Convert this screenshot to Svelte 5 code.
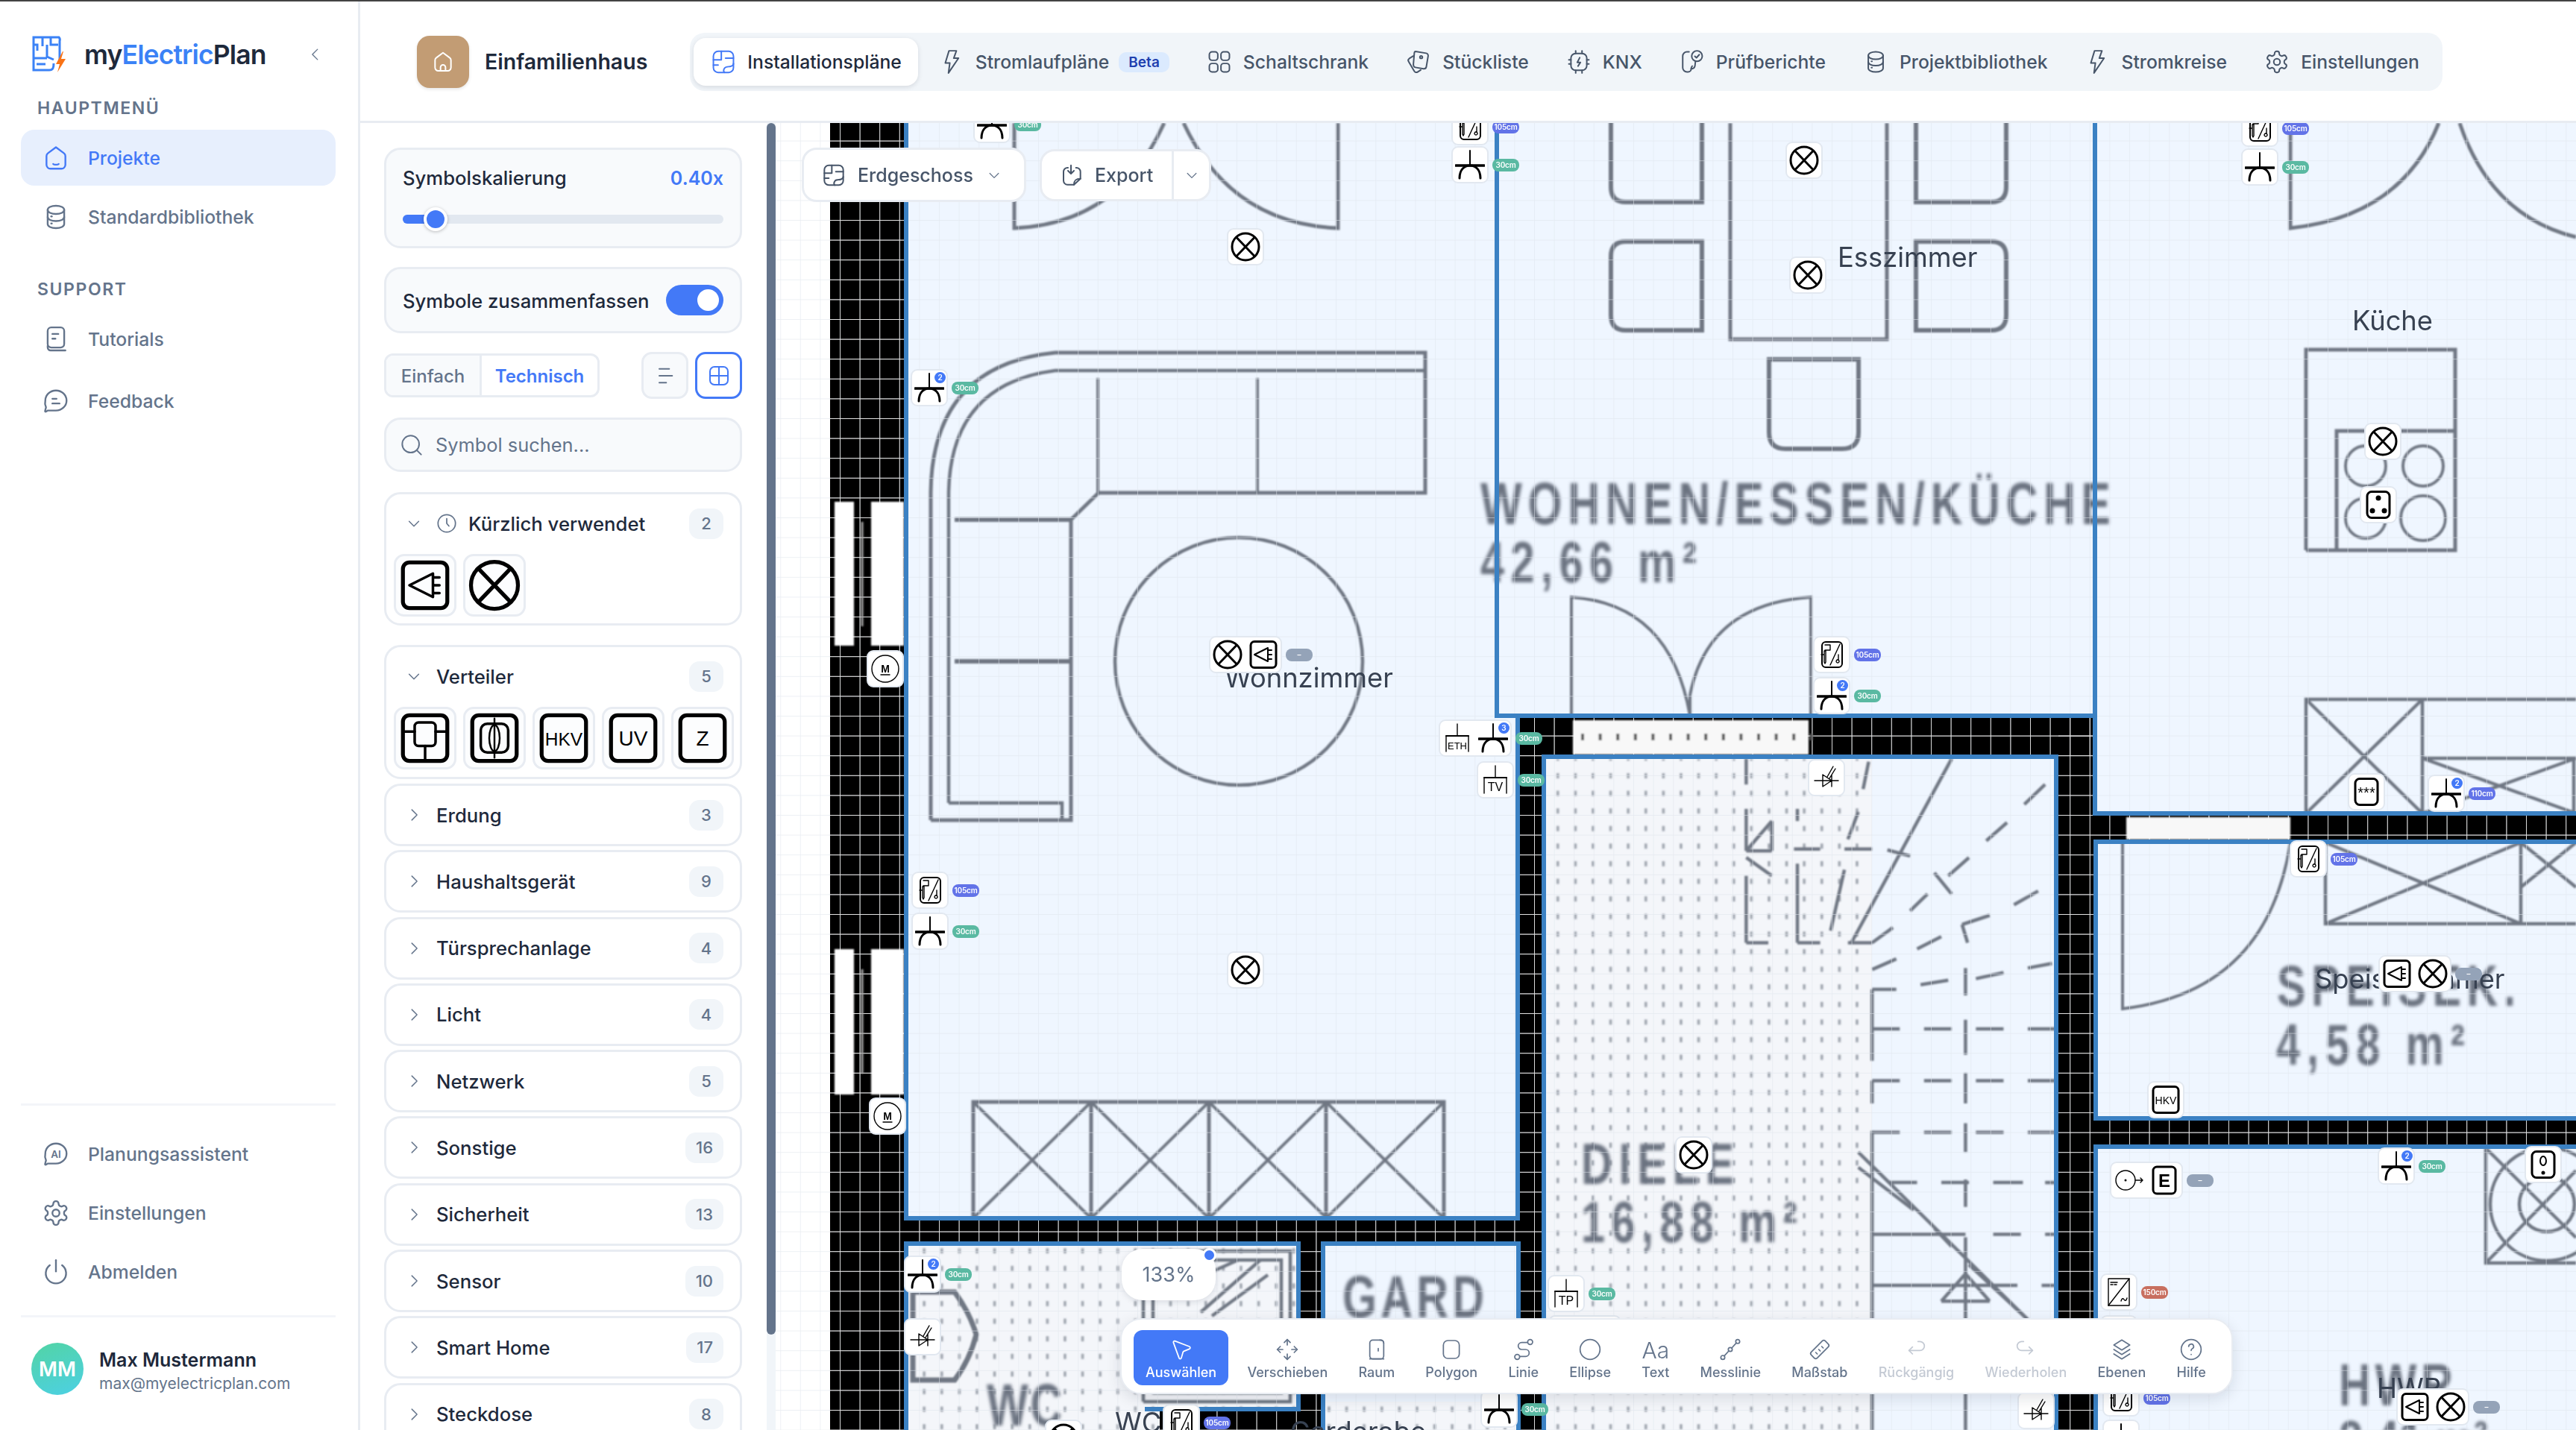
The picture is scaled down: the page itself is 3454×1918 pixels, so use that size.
<script>
  const rr = (x, y, w, h, r) =>
    `M${x + r} ${y}h${w - 2 * r}a${r} ${r} 0 0 1 ${r} ${r}v${h - 2 * r}a${r} ${r} 0 0 1 -${r} ${r}h-${w - 2 * r}a${r} ${r} 0 0 1 -${r} -${r}v-${h - 2 * r}a${r} ${r} 0 0 1 ${r} -${r}z`;
  const circ = (x, y, r) => `M${x - r} ${y}a${r} ${r} 0 1 0 ${2 * r} 0a${r} ${r} 0 1 0 -${2 * r} 0z`;
  const gear =
    'M12.22 2h-.44a2 2 0 0 0-2 2v.18a2 2 0 0 1-1 1.73l-.43.25a2 2 0 0 1-2 0l-.15-.08a2 2 0 0 0-2.73.73l-.22.38a2 2 0 0 0 .73 2.73l.15.1a2 2 0 0 1 1 1.72v.51a2 2 0 0 1-1 1.74l-.15.09a2 2 0 0 0-.73 2.73l.22.38a2 2 0 0 0 2.73.73l.15-.08a2 2 0 0 1 2 0l.43.25a2 2 0 0 1 1 1.73V20a2 2 0 0 0 2 2h.44a2 2 0 0 0 2-2v-.18a2 2 0 0 1 1-1.73l.43-.25a2 2 0 0 1 2 0l.15.08a2 2 0 0 0 2.73-.73l.22-.39a2 2 0 0 0-.73-2.73l-.15-.08a2 2 0 0 1-1-1.74v-.5a2 2 0 0 1 1-1.74l.15-.09a2 2 0 0 0 .73-2.73l-.22-.38a2 2 0 0 0-2.73-.73l-.15.08a2 2 0 0 1-2 0l-.43-.25a2 2 0 0 1-1-1.73V4a2 2 0 0 0-2-2z';
  const db = ['M5 6c0-2 3-3.5 7-3.5S19 4 19 6v12c0 2-3 3.5-7 3.5S5 20 5 18z', 'M5 6c0 2 3 3.5 7 3.5s7-1.5 7-3.5', 'M5 12c0 2 3 3.5 7 3.5s7-1.5 7-3.5', 'M8 11.5h.5', 'M8 17.5h.5'];
  const plan = [rr(2.5, 2, 19, 20, 4.5), 'M2.5 10h7.5V2', 'M2.5 15h4.5', 'M13 22c-1-1-1-2.500 0-4s3-1.500 4-1.500 4.500-.5 4.500-3', 'M14 8.5h7.500'];
  const bolt = ['M9.5 1.500h7l-2.500 7H18.500L9 22.500l1.300-9.500H6z'];
  const icons = {
    plan, bolt, db,
    grid4: [rr(2.5, 2.5, 8, 8, 2.5), rr(13.5, 2.5, 8, 8, 2.5), rr(2.5, 13.5, 8, 8, 2.5), rr(13.5, 13.5, 8, 8, 2.5)],
    bom: ['M9.2 2.1l10 1.700c1.300.2 2.100 1.400 1.900 2.700l-1.700 10.100c-.2 1.300-1.400 2.100-2.700 1.900L9 17.200c-1.200-.2-2-1.400-1.800-2.600l-.1.2L8 3.800c.1-1.100.4-1.700 1.200-1.700z', 'M7 6.500L3.300 8.800c-1 .7-1.300 2-.6 3l5.300 9c.7 1.100 2 1.500 3.100.8l3-1.900', circ(14.5, 7.5, 1.2)],
    knx: [rr(4.5, 4, 15, 16, 4.5), 'M9 1.500V4', 'M15 1.500V4', 'M9 20v2.500', 'M15 20v2.500', 'M2.500 10h2', 'M2.500 14h2', 'M19.500 10h2', 'M19.500 14h2', 'M12.800 8l-2.300 4.500h3L11.200 16'],
    check: ['M9 2.500H7a4 4 0 0 0-4 4v11a4 4 0 0 0 4 4h1c2 0 3-1.500 3-3 0-1 0-1.500 1-2.500', 'M11 18.500c1.500 0 3.200-.8 3.600-2.800L15 12', circ(16.5, 6.5, 5), 'M14.500 6.700l1.500 1.400 2.700-3'],
    gear: [gear, circ(12, 12, 3)],
    home: ['M12 2.800l6.900 5.200c.7.5 1.100 1.400 1.100 2.300v7.400a3.300 3.300 0 0 1-3.300 3.300H7.300A3.300 3.300 0 0 1 4 17.700v-7.400c0-.9.4-1.800 1.100-2.300z', 'M9.700 17c.7.8 3.900.8 4.600 0'],
    homeDoor: ['M12 2.800l6.900 5.200c.7.5 1.100 1.400 1.100 2.300v7.400a3.300 3.300 0 0 1-3.300 3.300H7.300A3.300 3.300 0 0 1 4 17.700v-7.400c0-.9.4-1.800 1.100-2.300z', 'M9.500 21v-3.500a2.500 2.500 0 0 1 5 0V21'],
    book: [rr(5, 2, 14, 17, 3), 'M5 17.500V19a2.500 2.500 0 0 0 2.500 2.500H20', 'M9 7.500h5', 'M9 11.500h2.500'],
    chat: ['M12 3c5 0 9 3.800 9 8.500S17 20 12 20H5c-1.300 1-2.200 1.400-2.200.4l.8-3.200A8.600 8.600 0 0 1 3 11.500C3 6.800 7 3 12 3z', 'M9 10h3.500', 'M9 14h6'],
    bubble: ['M12 3c5 0 9 3.800 9 8.500S17 20 12 20H5c-1.300 1-2.200 1.400-2.200.4l.8-3.200A8.600 8.600 0 0 1 3 11.500C3 6.800 7 3 12 3z'],
    power: ['M12 2v9.500', 'M6.800 6.300a8.600 8.600 0 1 0 10.400 0'],
    clock: [circ(12, 12, 10), 'M12 6.500V12l2.500 3'],
    search: [circ(11, 11, 8.5), 'M17.500 17.500L21.500 21.500'],
    down: ['M5 9l7 7 7-7'],
    right: ['M9 4.500l7.500 7.500L9 19.500'],
    left: ['M15 4.500L7.500 12 15 19.500'],
    lines: ['M6 5h10', 'M6 12h13', 'M6 19h7'],
    gridv: [rr(3, 3, 18, 18, 4.5), 'M12 3v18', 'M3 12h18'],
    exp: ['M7.500 4.500H7a4 4 0 0 0-4 4v9a4 4 0 0 0 4 4h6.500l6.500-6V8.500a4 4 0 0 0-4-4h-.5', 'M13.500 21.500c0-4 1.500-6 6.500-6', 'M10.500 2v8', 'M7.500 7.500l3 3 3-3'],
    pointer: ['M5.500 3.500L20 9c1.200.5 1.200 2 0 2.500l-5.500 2.300c-.4.2-.7.5-.8.9L12 20.500c-.4 1.300-2 1.300-2.300 0L4 5c-.3-1 .6-1.800 1.500-1.500z'],
    move: ['M12 2v5.500', 'M12 16.500V22', 'M2 12h5.500', 'M16.500 12H22', 'M9 5l3-3 3 3', 'M9 19l3 3 3-3', 'M5 9l-3 3 3 3', 'M19 9l3 3-3 3'],
    room: [rr(5, 2.5, 14, 19, 3), 'M15 2.500c2.500 0 4 1 4 3', 'M13.500 11v2.500', 'M5 21.500h14'],
    poly: [rr(4, 3, 16, 18, 4.5)],
    line: [circ(18.5, 4.5, 2.5), circ(5.5, 19.5, 2.5), 'M15.500 5H10a3.500 3.500 0 0 0 0 7h4a3.500 3.500 0 0 1 0 7H8.500'],
    ell: [circ(12, 12, 10)],
    mess: [circ(19.5, 4, 2), circ(12, 12, 2), circ(4.5, 20, 2), 'M18 5.500L13.500 10.500', 'M10.500 13.500L6 18.500'],
    ruler: ['M3.500 14.500L14.500 3.500a2.200 2.200 0 0 1 3.100 0l2.900 2.900a2.200 2.200 0 0 1 0 3.100L9.500 20.500a2.200 2.200 0 0 1-3.100 0l-2.900-2.900a2.200 2.200 0 0 1 0-3.100z', 'M9.500 16.500l-1.500-1.500', 'M12.500 13.500l-1.500-1.500', 'M15.500 10.500L14 9'],
    undo: ['M14 4h2a4.500 4.500 0 0 1 0 9H5', 'M8.500 9.500L5 13l3.500 3.500'],
    redo: ['M10 4H8a4.500 4.500 0 0 0 0 9h11', 'M15.500 9.500L19 13l-3.500 3.500'],
    layers: ['M12 2.500l8 5-8 5-8-5z', 'M4 12l8 5 8-5', 'M4 16.500l8 5 8-5'],
    help: [circ(12, 12, 10), 'M9.500 9a2.500 2.500 0 1 1 3.600 2.300c-.8.4-1.100.9-1.100 1.700', 'M12 17h.01']
  };

  const tabs = [
    { icon: 'plan', label: 'Installationspläne', active: true },
    { icon: 'bolt', label: 'Stromlaufpläne', beta: true },
    { icon: 'grid4', label: 'Schaltschrank' },
    { icon: 'bom', label: 'Stückliste' },
    { icon: 'knx', label: 'KNX' },
    { icon: 'check', label: 'Prüfberichte' },
    { icon: 'db', label: 'Projektbibliothek' },
    { icon: 'bolt', label: 'Stromkreise' },
    { icon: 'gear', label: 'Einstellungen' }
  ];
  const cats = [
    ['Erdung', 3], ['Haushaltsgerät', 9], ['Türsprechanlage', 4], ['Licht', 4], ['Netzwerk', 5],
    ['Sonstige', 16], ['Sicherheit', 13], ['Sensor', 10], ['Smart Home', 17], ['Steckdose', 8]
  ];
  const tools = [
    { icon: 'pointer', label: 'Auswählen', active: true }, { icon: 'move', label: 'Verschieben' },
    { icon: 'room', label: 'Raum' }, { icon: 'poly', label: 'Polygon' }, { icon: 'line', label: 'Linie' },
    { icon: 'ell', label: 'Ellipse' }, { icon: 'aa', label: 'Text' }, { icon: 'mess', label: 'Messlinie' },
    { icon: 'ruler', label: 'Maßstab' }, { icon: 'undo', label: 'Rückgängig', off: true },
    { icon: 'redo', label: 'Wiederholen', off: true }, { icon: 'layers', label: 'Ebenen' }, { icon: 'help', label: 'Hilfe' }
  ];

  const G = 'green', B = 'blue', R = 'red', N = 'gray';
  // x, y = page centre of the node's card
  const nodes = [
    { x: 1330, y: 167, s: ['sock'], b: [G, '30cm'] },
    { x: 1971, y: 170, s: ['win'], b: [B, '105cm'] },
    { x: 1971, y: 221, s: ['sock'], b: [G, '30cm'] },
    { x: 1670, y: 331, s: ['lamp'] },
    { x: 2419, y: 215, s: ['lamp'] },
    { x: 2424, y: 369, s: ['lamp'] },
    { x: 3030, y: 172, s: ['win'], b: [B, '105cm'] },
    { x: 3030, y: 224, s: ['sock'], b: [G, '30cm'] },
    { x: 1246, y: 520, s: ['sock'], n: 2, b: [G, '30cm'] },
    { x: 3195, y: 592, s: ['lamp'] },
    { x: 3189, y: 677, s: ['s3'] },
    { x: 1671, y: 878, s: ['lamp', 'spot'], b: [N, '–'] },
    { x: 1187, y: 897, s: ['m'] },
    { x: 2456, y: 878, s: ['win'], b: [B, '105cm'] },
    { x: 2456, y: 933, s: ['sock'], n: 2, b: [G, '30cm'] },
    { x: 1979, y: 990, s: ['eth', 'sock'], n: 3, b: [G, '30cm'] },
    { x: 2005, y: 1046, s: ['tv'], b: [G, '30cm'] },
    { x: 2449, y: 1043, s: ['dim'] },
    { x: 3173, y: 1062, s: ['star'] },
    { x: 3280, y: 1064, s: ['sock'], n: 2, b: [B, '110cm'] },
    { x: 3095, y: 1152, s: ['win'], b: [B, '105cm'] },
    { x: 1247, y: 1194, s: ['win'], b: [B, '105cm'] },
    { x: 1247, y: 1249, s: ['sock'], b: [G, '30cm'] },
    { x: 1670, y: 1301, s: ['lamp'] },
    { x: 3239, y: 1306, s: ['spot', 'lamp'], b: [N, '–'] },
    { x: 2904, y: 1475, s: ['hkv'] },
    { x: 1190, y: 1497, s: ['m'] },
    { x: 2271, y: 1549, s: ['lamp'] },
    { x: 2879, y: 1583, s: ['dotc', 'e'], b: [N, '–'] },
    { x: 3213, y: 1564, s: ['sock'], n: 2, b: [G, '30cm'] },
    { x: 3410, y: 1562, s: ['s1'] },
    { x: 1237, y: 1709, s: ['sock'], n: 2, b: [G, '30cm'] },
    { x: 2100, y: 1735, s: ['tp'], b: [G, '30cm'] },
    { x: 2841, y: 1733, s: ['inv'], b: [R, '150cm'] },
    { x: 1237, y: 1793, s: ['dim'] },
    { x: 2126, y: 1789, s: ['sock', 'sock'] },
    { x: 2841, y: 1789, s: ['sock'] },
    { x: 3263, y: 1887, s: ['spot', 'lamp'], b: [N, '–'] },
    { x: 2010, y: 1890, s: ['sock'], b: [G, '30cm'] },
    { x: 2730, y: 1892, s: ['dim'] },
    { x: 2844, y: 1875, s: ['win'], b: [B, '105cm'] },
    { x: 1584, y: 1908, s: ['win'], b: [B, '105cm'] },
    { x: 1426, y: 1929, s: ['lamp'] },
    { x: 2844, y: 1929, s: ['sock'] }
  ];

  // plan lines read off the reference in crop coordinates
  const z8 = (a) => a.map(([x1, y1, x2, y2]) => [2000 + x1 / 1.078, 640 + y1 / 2.45, 2000 + x2 / 1.078, 640 + y2 / 2.45]);
  const z10 = (a) => a.map(([x1, y1, x2, y2]) => [2000 + x1 / 1.078, 1280 + y1 / 2.45, 2000 + x2 / 1.078, 1280 + y2 / 2.45]);
  const stairs = [
    ...z8([
      [368, 925, 368, 1010], [368, 1090, 368, 1228], [368, 1228, 405, 1228], [405, 1130, 368, 1228], [405, 1130, 405, 1228],
      [368, 1250, 405, 1310], [368, 1310, 368, 1530], [368, 1530, 400, 1530], [442, 1090, 442, 1130], [442, 1270, 442, 1530],
      [442, 1530, 475, 1530], [437, 1222, 475, 1222], [510, 1222, 550, 1222], [572, 1225, 605, 1245], [545, 935, 537, 1025],
      [530, 1100, 515, 1190], [510, 1290, 490, 1490], [665, 925, 520, 1530], [515, 1530, 550, 1530], [550, 1530, 580, 1480],
      [800, 1010, 770, 1075], [745, 1135, 715, 1195], [690, 1250, 660, 1310], [640, 1300, 665, 1370], [630, 1370, 605, 1425],
      [790, 1360, 755, 1405], [720, 1440, 680, 1470], [680, 1470, 688, 1530], [650, 1510, 615, 1550]
    ]),
    ...z10([
      [550, 115, 585, 115], [620, 100, 660, 85], [700, 80, 740, 60], [775, 45, 810, 30], [550, 50, 585, 15], [550, 115, 550, 350],
      [550, 415, 550, 490], [550, 580, 550, 1568], [550, 245, 590, 245], [625, 245, 665, 245], [700, 245, 740, 245], [775, 245, 815, 245],
      [550, 415, 590, 415], [625, 415, 665, 415], [700, 415, 740, 415], [775, 415, 815, 415],
      [550, 585, 590, 585], [625, 585, 665, 585], [700, 585, 740, 585], [775, 585, 815, 585],
      [575, 750, 615, 750], [650, 750, 690, 750], [725, 750, 768, 750], [800, 750, 815, 750],
      [550, 920, 685, 920], [725, 920, 765, 920], [800, 920, 815, 920], [550, 1088, 760, 1088], [795, 1088, 815, 1088],
      [685, 45, 685, 135], [685, 215, 685, 330], [685, 390, 685, 490], [685, 555, 685, 650], [685, 740, 685, 830], [685, 930, 685, 1568],
      [530, 650, 775, 1200], [530, 700, 610, 840], [640, 900, 665, 960], [690, 1020, 775, 1200],
      [685, 1050, 650, 1140], [685, 1050, 720, 1140], [650, 1140, 720, 1140]
    ])
  ];
  const shelves = [1305, 1463, 1621, 1778];
  const doorDots = Array.from({ length: 14 }, (_, i) => 2120 + i * 23.6);
  const walls = [
    [1113, 165, 99, 1753], [1212, 1634, 825, 34], [1744, 1668, 28, 250], [1555, 1892, 189, 26],
    [2037, 962, 30, 956], [2037, 962, 770, 52], [2760, 962, 47, 956], [2807, 1094, 647, 33], [2807, 1503, 647, 33]
  ];
  // seats: rounded on the side away from the table
  const chairs = [
    'M2282 150V271H2180Q2160 271 2160 251V150',
    'M2282 324H2180Q2160 324 2160 344V423Q2160 443 2180 443H2282Z',
    'M2569 150V271H2670Q2690 271 2690 251V150',
    'M2569 324H2670Q2690 324 2690 344V423Q2690 443 2670 443H2569Z',
    'M2372 482H2492V580Q2492 602 2470 602H2394Q2372 602 2372 580Z'
  ];
  // scanned floor-plan lettering: narrow glyphs, wide tracking
  const SX = 0.74;
  const scans = [
    ['WOHNEN/ESSEN/KÜCHE', 1985, 703, 80, 845], ['42,66 m²', 1985, 781, 78, 290],
    ['DIELE', 2120, 1588, 78, 205], ['16,88 m²', 2120, 1666, 78, 290],
    ['SPEISEK.', 3053, 1349, 78, 320], ['4,58 m²', 3052, 1428, 78, 253],
    ['GARD', 1800, 1767, 80, 190], ['WC', 1323, 1912, 80, 101],
    ['HWR', 3136, 1885, 80, 153], ['8,41 m²', 3136, 1960, 78, 200]
  ];
</script>

{#snippet icon(name)}
  <svg class="ic" viewBox="0 0 24 24">
    {#each icons[name] as d}<path {d} />{/each}
  </svg>
{/snippet}

{#snippet sym(k)}
  <svg class="sym" viewBox="0 0 40 40">
    {#if k === 'lamp'}
      <circle cx="20" cy="20" r="18" /><path d="M8 7.500l24 25M32 7.500L8 32.500" />
    {:else if k === 'spot'}
      <rect x="3" y="2.500" width="34" height="35" rx="5" /><path class="thin" d="M8 20l18-9v18zM27 14h4M27 20h4M27 26h4" />
    {:else if k === 'sock'}
      <path class="thin" d="M20 1v19" /><path class="bar" d="M1 21h38" /><path d="M6 38c0-11 6-17 14-17s14 6 14 17" />
    {:else if k === 'win'}
      <rect class="thin" x="7" y="3" width="27" height="34" rx="5" /><path class="hair" d="M31 6L18 34M11 7h7v7h-7M12 15v15l-1 2-1-2V15h2M6 20h3M28 27a2 2 0 1 0 .1 0M29 20v7" />
    {:else if k === 'inv'}
      <rect class="hair" x="6" y="2" width="28" height="36" /><path class="hair" d="M34 2L6 38M9 7h9M9 10h3M14 10h3M23 32c1-4 3-4 4-2s3 2 4-2" />
    {:else if k === 'm'}
      <circle class="hair" cx="20" cy="20" r="18" /><text class="tx b" x="20" y="25" font-size="14">M</text><path class="hair" d="M14 28h12" />
    {:else if k === 'eth' || k === 'tv' || k === 'tp'}
      <path class="hair" d="M20 1v16" /><path class="hair" d="M5 17v21M35 17v21" /><path d="M5 17h30" class="thin" />
      <text class="tx" x="20" y="35" font-size={k === 'eth' ? 13 : 16}>{k.toUpperCase()}</text>
    {:else if k === 'dim'}
      <path class="hair" d="M4 24h32M15 16v16l12-8zM27 16v16M21 19L29 5M24 21l8-13" />
    {:else if k === 'star'}
      <rect x="5" y="2.500" width="30" height="35" rx="6" /><text class="tx" x="20" y="28" font-size="20">***</text>
    {:else if k === 's3'}
      <rect x="5" y="2.500" width="30" height="35" rx="6" /><circle class="dot" cx="20" cy="11" r="3.500" /><circle class="dot" cx="12" cy="28" r="3.500" /><circle class="dot" cx="28" cy="28" r="3.500" />
    {:else if k === 's1'}
      <rect x="5" y="2.500" width="30" height="35" rx="6" /><ellipse class="thin" cx="20" cy="15" rx="4" ry="6" /><circle class="dot" cx="20" cy="31" r="2.500" />
    {:else if k === 'dotc'}
      <circle class="hair" cx="16" cy="20" r="13" /><circle class="dot" cx="16" cy="20" r="1.500" /><path class="hair" d="M29 20h10M36 17l3 3-3 3" />
    {:else if k === 'v1'}
      <rect x="3" y="2.500" width="34" height="35" rx="5" /><rect class="thin" x="12" y="8" width="16" height="18" rx="3" /><path class="thin" d="M3 15h9M28 15h9M20 26v10" />
    {:else if k === 'v2'}
      <rect x="3" y="2.500" width="34" height="35" rx="5" /><rect class="thin" x="9.500" y="9" width="21" height="22" rx="5" /><ellipse class="hair" cx="20" cy="20" rx="4" ry="10" /><path class="hair" d="M20 5v30" />
    {:else if k === 'e'}
      <rect x="5" y="2" width="30" height="36" rx="5" /><text class="tx b" x="20" y="29" font-size="24">E</text>
    {:else}
      <rect x="3" y="2.500" width="34" height="35" rx="5" />
      <text class="tx" x="20" y="25.500" font-size={k === 'hkv' ? 14 : 16}>{k.toUpperCase()}</text>
    {/if}
  </svg>
{/snippet}

<div class="app">
  <div class="topline"></div>
  <div class="shell">
    <aside class="sidebar">
      <div class="logo">
        <svg class="mark" viewBox="0 0 50 50">
          <g fill="none" stroke="#3b82f6" stroke-width="3">
            <path d="M38 36V7a5 5 0 0 0-1-5H3v44h21c5 0 6-3 6-9" />
            <path d="M3 30h18M15 2v12M26 2v10h10M3 12h5v8M19 38H7M21 12v16l9 4" />
          </g>
          <path d="M42 21L33 38h5l-3 11 11-18h-6l3-10z" fill="#f97316" />
        </svg>
        <span class="brand">my<em>Electric</em>Plan</span>
        <span class="collapse">{@render icon('left')}</span>
      </div>

      <div class="grouplabel">HAUPTMENÜ</div>
      <a class="nav active"><span class="navic">{@render icon('home')}</span>Projekte</a>
      <a class="nav n2"><span class="navic">{@render icon('db')}</span>Standardbibliothek</a>

      <div class="grouplabel support">SUPPORT</div>
      <a class="nav"><span class="navic">{@render icon('book')}</span>Tutorials</a>
      <a class="nav n3"><span class="navic">{@render icon('chat')}</span>Feedback</a>

      <div class="foot">
        <a class="nav">
          <span class="navic">
            <svg class="ic" viewBox="0 0 24 24">
              <path d={icons.bubble[0]} /><text class="ai" x="12" y="15" font-size="8.500">AI</text>
            </svg>
          </span>Planungsassistent
        </a>
        <a class="nav n4"><span class="navic">{@render icon('gear')}</span>Einstellungen</a>
        <a class="nav n5"><span class="navic">{@render icon('power')}</span>Abmelden</a>
      </div>
      <div class="user">
        <div class="avatar">MM</div>
        <div class="who">
          <strong>Max Mustermann</strong>
          <span>max@myelectricplan.com</span>
        </div>
      </div>
    </aside>

    <div class="main">
      <header class="header">
        <div class="tile">{@render icon('homeDoor')}</div>
        <h1>Einfamilienhaus</h1>
        <nav class="tabs">
          {#each tabs as t}
            <div class="tab" class:on={t.active}>
              {@render icon(t.icon)}
              <span>{t.label}</span>
              {#if t.beta}<b class="beta">Beta</b>{/if}
            </div>
          {/each}
        </nav>
      </header>

      <div class="body">
        <section class="panel">
          <div class="card scale">
            <div class="row"><span>Symbolskalierung</span><span class="val">0.40x</span></div>
            <div class="slider"><i class="fill"></i><i class="knob"></i></div>
          </div>
          <div class="card merge">
            <span>Symbole zusammenfassen</span>
            <div class="toggle"><i></i></div>
          </div>
          <div class="modes">
            <div class="seg">
              <span class="seg1">Einfach</span><span class="seg2">Technisch</span>
            </div>
            <div class="views">
              <button class="vbtn">{@render icon('lines')}</button>
              <button class="vbtn sel">{@render icon('gridv')}</button>
            </div>
          </div>
          <div class="card searchbox">
            {@render icon('search')}<span>Symbol suchen...</span>
          </div>

          <div class="cat recent">
            <div class="cathead">
              <span class="chev">{@render icon('down')}</span>
              <span class="clock">{@render icon('clock')}</span>
              <span class="name">Kürzlich verwendet</span>
              <span class="count">2</span>
            </div>
            <div class="symgrid">
              <div class="symbtn">{@render sym('spot')}</div>
              <div class="symbtn">{@render sym('lamp')}</div>
            </div>
          </div>

          <div class="cat verteiler">
            <div class="cathead">
              <span class="chev">{@render icon('down')}</span>
              <span class="name">Verteiler</span>
              <span class="count">5</span>
            </div>
            <div class="symgrid">
              {#each ['v1', 'v2', 'hkv', 'uv', 'z'] as k}
                <div class="symbtn">{@render sym(k)}</div>
              {/each}
            </div>
          </div>

          {#each cats as [name, n]}
            <div class="cat closed">
              <div class="cathead">
                <span class="chev">{@render icon('right')}</span>
                <span class="name">{name}</span>
                <span class="count">{n}</span>
              </div>
            </div>
          {/each}
        </section>

        <div class="scrolltrack"><i></i></div>

        <section class="canvas">
          <svg class="plan" viewBox="1040 165 2414 1753">
            <defs>
              <pattern id="gFaint" x="1126" y="321.600" width="26.600" height="26.600" patternUnits="userSpaceOnUse">
                <path d="M26.600 0H0V26.600" fill="none" stroke="#dfe5ec" stroke-width="1.500" opacity=".7" />
              </pattern>
              <pattern id="gWhite" x="1126" y="321.600" width="26.600" height="26.600" patternUnits="userSpaceOnUse">
                <path d="M26.600 0H0V26.600" fill="none" stroke="#e3e3e3" stroke-width="1.800" />
              </pattern>
              <pattern id="dots" x="2078" y="1030" width="23.600" height="23.600" patternUnits="userSpaceOnUse">
                <rect x="9" y="7" width="3.500" height="7" fill="#6b7280" opacity=".62" />
              </pattern>
              <filter id="soft" x="-2%" y="-2%" width="104%" height="104%">
                <feGaussianBlur stdDeviation="1.300" />
              </filter>
              <filter id="softer" x="-2%" y="-2%" width="104%" height="104%">
                <feGaussianBlur stdDeviation="2" />
              </filter>
            </defs>

            <rect x="1040" y="165" width="2414" height="1753" fill="#fff" />
            <rect x="1215" y="165" width="2239" height="1753" fill="#eff6ff" />

            <g>
              <rect x="2074" y="1018" width="436" height="900" fill="#f4f6fa" />
              <rect x="1218" y="1672" width="520" height="246" fill="#f4f6fa" />
              <rect x="1776" y="1880" width="258" height="38" fill="#f4f6fa" />
            </g>
            <g filter="url(#soft)">
              <rect x="2074" y="1018" width="436" height="900" fill="url(#dots)" />
              <rect x="1218" y="1672" width="520" height="246" fill="url(#dots)" />
              <rect x="1776" y="1880" width="258" height="38" fill="url(#dots)" />

              <g fill="none" stroke="#707783" stroke-width="5">
                <!-- wohnzimmer: doors, sofa, table, shelves -->
                <path d="M1360 165V306Q1500 300 1561 165M1587 165Q1650 300 1794 306V165" />
                <path d="M1248 1100V660Q1250 490 1415 473H1911V661H1473L1436 697V1100H1248" />
                <path d="M1272 1077V660Q1275 515 1415 497H1911" stroke-width="4.500" />
                <path d="M1272 1077H1424V1100" stroke-width="4.500" />
                <path d="M1280 697H1436M1280 887H1436" stroke-width="6" />
                <path d="M1472 507V661M1686 507V661" stroke-width="4" />
                <circle cx="1661" cy="887" r="166" stroke-width="4.500" />
                <path d="M1305 1634V1478H1936V1634M1463 1478V1634M1621 1478V1634M1778 1478V1634" />
                {#each shelves as x}
                  <path d="M{x} 1478L{x + 158} 1634M{x + 158} 1478L{x} 1634" stroke-width="4" />
                {/each}
                <!-- esszimmer -->
                <path d="M2320 165V455H2530V165" />
                {#each chairs as d}<path {d} stroke-width="6" />{/each}
                <!-- kueche -->
                <path d="M3071 165V306Q3220 290 3270 165M3298 165Q3340 290 3454 318" />
                <path d="M3092 738V469H3292V738H3092M3133 738V578H3292" />
                <circle cx="3172" cy="625" r="27" stroke-width="4" /><circle cx="3249" cy="625" r="27" stroke-width="4" />
                <circle cx="3172" cy="695" r="27" stroke-width="4" /><circle cx="3249" cy="695" r="30" stroke-width="4" />
                <path d="M3092 1091V938H3454M3248 938V1091M3092 938L3248 1091M3248 938L3092 1091" stroke-width="4.500" />
                <path d="M3248 1017H3454M3451 1017V1091M3248 1017L3454 1091M3454 1017L3248 1091" stroke-width="4.500" />
                <!-- wohnen doors -->
                <path d="M2107 960V801Q2240 810 2266 960M2266 932V960M2428 960V801Q2290 810 2266 932" stroke-width="4" />
                <!-- stairs -->
                {#each stairs as [x1, y1, x2, y2]}
                  <line {x1} {y1} {x2} {y2} stroke-width="4.500" />
                {/each}
                <!-- speise -->
                <path d="M2846 1130V1353Q3040 1330 3071 1130" stroke-width="4" />
                <path d="M3118 1130V1239H3454M3380 1130V1239M3118 1130L3380 1239M3380 1130L3118 1239" stroke-width="4.500" />
                <path d="M3380 1130L3454 1190M3454 1130L3380 1190" stroke-width="4.500" />
                <!-- hwr -->
                <path d="M3333 1540V1694H3454M3333 1540L3454 1660M3333 1694L3454 1570" stroke-width="4.500" />
                <circle cx="3415" cy="1615" r="76" stroke-width="4.500" /><circle cx="3415" cy="1615" r="37" stroke-width="4.500" />
                <!-- wc -->
                <path d="M1224 1733H1280Q1300 1760 1309 1790Q1300 1825 1280 1851H1224V1733" stroke-width="7" />
                <path d="M1533 1880V1678H1730V1880H1533M1546 1868V1690H1718V1868H1546" stroke-width="4.500" />
                <path d="M1560 1735L1660 1690M1610 1760L1690 1690M1625 1765L1700 1710" stroke-width="4.500" />
              </g>
            </g>

            <g class="scan" filter="url(#softer)" fill="#6b7280">
              {#each scans as [str, x, y, size, len]}
                <text transform="translate({x} {y}) scale({SX} 1)" font-size={size} textLength={len / SX} lengthAdjust="spacing">{str}</text>
              {/each}
            </g>

            {#each walls as [x, y, width, height]}<rect {x} {y} {width} {height} fill="#000" />{/each}
            <rect x="1040" y="165" width="2414" height="1753" fill="url(#gFaint)" />
            {#each walls as [x, y, width, height]}<rect {x} {y} {width} {height} fill="url(#gWhite)" />{/each}

            <g filter="url(#soft)">
              <rect x="1119" y="673" width="26" height="193" fill="#fff" />
              <rect x="1168" y="673" width="44" height="193" fill="#fff" />
              <rect x="1119" y="1273" width="26" height="195" fill="#fff" />
              <rect x="1168" y="1273" width="44" height="195" fill="#fff" />
              <path d="M1156 700V840M1156 1300V1440" stroke="#a8a8a8" stroke-width="3" />
              <rect x="2109" y="966" width="316" height="46" fill="#f8f8f8" />
              <rect x="2851" y="1096" width="220" height="30" fill="#f8f8f8" />
              {#each doorDots as x}<rect {x} y="984" width="4" height="9" fill="#555" />{/each}
            </g>

            <g fill="none" stroke="#3b81c3" stroke-width="6">
              <path d="M1215 165V1634H2035V962" />
              <path d="M2007 165V960H2807" />
              <path d="M2809 165V1091H3454" />
              <path d="M2070 1918V1015H2757V1918" />
              <path d="M1774 1918V1668H2036V1918" />
              <path d="M1215 1918V1668H1741V1890H1535" />
              <path d="M3454 1129H2810V1500H3454" />
              <path d="M2810 1918V1538H3454" />
            </g>

            <g class="labels">
              <text x="2464" y="358">Esszimmer</text>
              <text x="3154" y="443">Küche</text>
              <text x="1642" y="922">Wohnzimmer</text>
              <text x="3104" y="1326">Speisekammer</text>
              <text x="3187" y="1875">HWR</text>
              <text x="1495" y="1921">WC</text>
              <text x="1730" y="1933">Garderobe</text>
            </g>
          </svg>

          {#each nodes as n}
            <div class="node" style="left:{n.x - 1040 - (n.s.length > 1 ? 50 : 25)}px;top:{n.y - 165 - 25}px">
              <div class="nodecard">
                {#each n.s as k}{@render sym(k)}{/each}
                {#if n.n}<i class="num">{n.n}</i>{/if}
              </div>
              {#if n.b}<span class="tag {n.b[0]}">{n.b[1]}</span>{/if}
            </div>
          {/each}

          <div class="floatbar">
            <button class="fbtn floor">
              {@render icon('plan')}<span>Erdgeschoss</span><i class="chv">{@render icon('down')}</i>
            </button>
            <div class="fbtn export">
              <div class="expmain">{@render icon('exp')}<span>Export</span></div>
              <div class="expmore">{@render icon('down')}</div>
            </div>
          </div>

          <div class="zoomchip">133%<i></i></div>

          <div class="toolbar">
            {#each tools as t}
              <div class="tool" class:act={t.active} class:off={t.off}>
                {#if t.icon === 'aa'}<span class="aa">Aa</span>{:else}{@render icon(t.icon)}{/if}
                <span class="tl">{t.label}</span>
              </div>
            {/each}
          </div>
        </section>
      </div>
    </div>
  </div>
</div>

<style>
  :global(body) { margin: 0; background: #fff; }
  .app { width: 3454px; height: 1918px; overflow: hidden; display: flex; flex-direction: column; font-family: Inter, "Noto Sans", sans-serif; color: #1e293b; }
  .topline { height: 2px; background: #444; flex: none; }
  .shell { flex: 1; display: flex; min-height: 0; }
  .ic { display: block; width: 32px; height: 32px; fill: none; stroke: currentColor; stroke-width: 1.500; stroke-linecap: round; stroke-linejoin: round; flex: none; }
  .ai { font-family: Inter, sans-serif; font-weight: 600; fill: currentColor; stroke: none; text-anchor: middle; }

  .sidebar { width: 483px; flex: none; box-sizing: border-box; border-right: 3px solid #e8ecf2; padding: 46px 30px 0 28px; display: flex; flex-direction: column; }
  .logo { display: flex; align-items: center; height: 50px; padding-left: 14px; position: relative; }
  .mark { width: 50px; height: 50px; flex: none; }
  .brand { margin-left: 21px; font-size: 35.500px; font-weight: 600; letter-spacing: -.9px; color: #1e293b; }
  .brand em { font-style: normal; color: #3b82f6; }
  .collapse { margin-left: auto; margin-right: 16px; color: #64748b; }
  .collapse :global(.ic) { width: 22px; height: 22px; }
  .grouplabel { margin: 35px 0 17px 22px; font-size: 23px; line-height: 24px; font-weight: 600; letter-spacing: 1.600px; color: #64748b; }
  .grouplabel.support { margin-top: 48px; }
  .nav { height: 75px; display: flex; align-items: center; padding-left: 28px; border-radius: 18px; font-size: 24.700px; font-weight: 500; color: #64748b; }
  .navic { width: 38px; margin-right: 24px; display: flex; justify-content: center; }
  .navic :global(.ic) { width: 38px; height: 38px; }
  .nav.active { background: #e7effd; color: #4379f7; }
  .n2 { margin-top: 4px; }
  .n3 { margin-top: 8px; }
  .foot { margin-top: auto; border-top: 3px solid #f3f5f9; padding-top: 27px; padding-bottom: 21px; }
  .n4 { margin-top: 4.500px; }
  .n5 { margin-top: 3.500px; }
  .user { border-top: 3px solid #f3f5f9; padding: 34px 0 47px 14px; display: flex; align-items: center; gap: 21px; }
  .avatar { width: 70px; height: 70px; border-radius: 50%; background: linear-gradient(160deg, #52d4a4, #4cd0e4); color: #fff; font-size: 27px; font-weight: 600; display: flex; align-items: center; justify-content: center; flex: none; }
  .who { display: flex; flex-direction: column; gap: 4px; padding-top: 5px; }
  .who strong { font-size: 25px; font-weight: 600; line-height: 30px; }
  .who span { font-size: 21px; line-height: 26px; color: #64748b; }

  .main { flex: 1; min-width: 0; display: flex; flex-direction: column; }
  .header { height: 163px; flex: none; box-sizing: border-box; border-bottom: 3px solid #e8ecf2; display: flex; align-items: flex-start; padding: 42px 0 0 76px; }
  .tile { width: 70px; height: 70px; margin-top: 4px; border-radius: 17px; background: #c29c74; color: #fff; display: flex; align-items: center; justify-content: center; box-shadow: 0 2px 4px rgba(0,0,0,.1); flex: none; }
  h1 { margin: 0 0 0 21px; height: 78px; line-height: 78px; font-size: 28.500px; font-weight: 600; color: #1e293b; }
  .tabs { margin-left: 57px; height: 78px; box-sizing: border-box; display: flex; align-items: center; gap: 5px; background: #f1f5f9; border-radius: 20px; padding: 0 9px 0 5px; }
  .tab { height: 64px; display: flex; align-items: center; gap: 15px; padding: 0 22px 0 23px; border-radius: 16px; font-size: 24.700px; font-weight: 500; color: #475569; white-space: nowrap; }
  .tab :global(.ic) { width: 34px; height: 34px; stroke-width: 1.400; }
  .tab.on { background: #fff; color: #1e293b; box-shadow: 0 2px 6px rgba(15,23,42,.12); }
  .tab.on :global(.ic) { color: #4379f7; }
  .beta { margin-left: -2px; height: 27px; line-height: 27px; padding: 0 13px; border-radius: 10px; background: #dbeafe; color: #1e40af; font-size: 19px; font-weight: 600; }

  .body { flex: 1; display: flex; min-height: 0; }
  .panel { width: 545px; flex: none; box-sizing: border-box; padding: 33px 33px 0 32px; display: flex; flex-direction: column; overflow: hidden; }
  .card { box-sizing: border-box; border: 3px solid #e8ecf2; border-radius: 22px; background: #f8fafc; flex: none; }
  .scale { height: 135px; padding: 22px 22px 0; font-size: 25.700px; font-weight: 500; margin-bottom: 25px; }
  .row { display: flex; justify-content: space-between; line-height: 32px; }
  .val { color: #4379f7; font-weight: 600; font-size: 25px; }
  .slider { position: relative; margin-top: 33px; height: 12px; border-radius: 6px; background: #e2e8f0; }
  .fill { position: absolute; left: 0; top: 0; width: 38px; height: 12px; border-radius: 6px; background: #4379f7; }
  .knob { position: absolute; left: 28px; top: -10px; width: 24px; height: 24px; border: 4px solid #fff; border-radius: 50%; background: #4379f7; box-shadow: 0 1px 4px rgba(0,0,0,.25); }
  .merge { height: 89px; padding: 0 22px; display: flex; align-items: center; justify-content: space-between; font-size: 25.700px; font-weight: 500; margin-bottom: 25px; }
  .merge span { padding-top: 2px; }
  .toggle { width: 77px; height: 41px; border-radius: 21px; background: #4379f7; position: relative; }
  .toggle i { position: absolute; right: 6px; top: 6px; width: 29px; height: 29px; border-radius: 50%; background: #fff; }
  .modes { height: 63px; flex: none; display: flex; justify-content: space-between; align-items: center; margin-bottom: 25px; }
  .seg { width: 289px; height: 59px; box-sizing: border-box; border: 3px solid #e8ecf2; border-radius: 12px; display: flex; overflow: hidden; font-size: 24px; font-weight: 500; }
  .seg span { display: flex; align-items: center; justify-content: center; padding-top: 2px; }
  .seg1 { width: 125px; background: #f8fafc; color: #64748b; border-right: 3px solid #e8ecf2; }
  .seg2 { flex: 1; color: #4379f7; font-weight: 600; }
  .views { display: flex; gap: 9px; }
  .vbtn { width: 63px; height: 63px; box-sizing: border-box; border: 3px solid #e8ecf2; border-radius: 14px; background: #f8fafc; color: #64748b; display: flex; align-items: center; justify-content: center; padding: 0; }
  .vbtn.sel { background: #fff; border-color: #4379f7; color: #4379f7; }
  .searchbox { height: 73px; padding-left: 18px; display: flex; align-items: center; gap: 16px; font-size: 25.400px; color: #64748b; margin-bottom: 27px; }
  .cat { box-sizing: border-box; border: 3px solid #e8ecf2; border-radius: 22px; background: #fff; flex: none; }
  .recent { height: 179px; margin-bottom: 26px; }
  .verteiler { height: 180px; margin-bottom: 6px; }
  .closed { height: 84px; margin-bottom: 5.300px; }
  .cathead { height: 78px; display: flex; align-items: center; padding: 0 22px 0 26px; }
  .recent .cathead, .verteiler .cathead { margin-bottom: 2px; }
  .chev { width: 22px; margin-right: 19px; color: #64748b; display: flex; justify-content: center; }
  .chev :global(.ic) { width: 22px; height: 22px; stroke-width: 1.600; }
  .clock { margin-right: 15px; color: #64748b; display: flex; }
  .clock :global(.ic) { width: 28px; height: 28px; }
  .name { flex: 1; font-size: 25.700px; font-weight: 500; color: #1e293b; }
  .count { min-width: 18px; height: 41px; padding: 0 14px; border-radius: 14px; background: #f1f5f9; color: #64748b; font-size: 22px; font-weight: 500; display: flex; align-items: center; justify-content: center; }
  .symgrid { display: flex; gap: 9px; padding-left: 10px; }
  .symbtn { width: 84px; height: 84px; box-sizing: border-box; border: 3px solid #e8ecf2; border-radius: 14px; background: #fcfdfe; display: flex; align-items: center; justify-content: center; flex: none; }
  .sym { width: 40px; height: 40px; flex: none; fill: none; stroke: #000; stroke-width: 3; stroke-linecap: round; stroke-linejoin: round; display: block; }
  .symbtn .sym { width: 70px; height: 70px; }
  .sym .bar { stroke-width: 3.500; }
  .sym .thin { stroke-width: 2; }
  .sym .hair { stroke-width: 1.400; }
  .sym .dot { fill: #000; stroke: none; }
  .tx { fill: #000; stroke: none; font-family: "Liberation Sans", Arial, sans-serif; text-anchor: middle; }
  .tx.b { font-weight: 700; }

  .scrolltrack { width: 12px; flex: none; background: #f1f5f9; }
  .scrolltrack i { display: block; height: 1625px; border-radius: 6px; background: #64748b; }

  .canvas { flex: 1; position: relative; overflow: hidden; }
  .plan { position: absolute; left: 0; top: 0; width: 2414px; height: 1753px; display: block; }
  .scan text { font-family: "Liberation Sans", Arial, sans-serif; font-weight: 700; }
  .labels text { font-family: Inter, sans-serif; font-size: 36.300px; fill: #374151; }

  .node { position: absolute; display: flex; align-items: center; gap: 5px; }
  .nodecard { position: relative; height: 50px; min-width: 50px; box-sizing: border-box; border: 2px solid #e2e8f0; border-radius: 9px; background: #fff; display: flex; align-items: center; justify-content: center; gap: 8px; padding: 0 3px; }
  .num { position: absolute; right: 1px; top: 2px; width: 15px; height: 15px; border-radius: 50%; background: #4379f7; color: #fff; font-size: 10px; line-height: 15px; font-style: normal; font-weight: 600; text-align: center; }
  .tag { width: 36px; height: 17px; border-radius: 8px; color: #fff; font-size: 10px; line-height: 17px; font-weight: 600; text-align: center; white-space: nowrap; letter-spacing: -.2px; }
  .green { background: #5ab9a2; }
  .blue { background: #6273e8; }
  .red { background: #c86f5f; }
  .gray { background: #94a3b8; }

  .floatbar { position: absolute; left: 35px; top: 33px; display: flex; align-items: center; gap: 18px; }
  .fbtn { box-sizing: border-box; border: 3px solid #e8ecf2; border-radius: 20px; background: #fff; display: flex; align-items: center; font-family: Inter, sans-serif; font-size: 25px; font-weight: 500; color: #475569; }
  .floor { width: 301px; height: 73px; padding: 0 0 0 24px; gap: 16px; }
  .floor .chv { margin-left: auto; margin-right: 30px; color: #64748b; }
  .chv :global(.ic) { width: 20px; height: 20px; }
  .export { width: 230px; height: 70px; }
  .expmain { width: 177px; height: 100%; box-sizing: border-box; padding-left: 25px; display: flex; align-items: center; gap: 14px; border-right: 3px solid #e8ecf2; }
  .expmore { flex: 1; display: flex; justify-content: center; color: #64748b; }
  .expmore :global(.ic) { width: 20px; height: 20px; }

  .zoomchip { position: absolute; left: 464px; top: 1510px; width: 126px; height: 69px; border-radius: 28px; background: #fff; display: flex; align-items: center; justify-content: center; font-size: 27px; color: #64748b; box-shadow: 0 2px 8px rgba(15,23,42,.12); }
  .zoomchip i { position: absolute; right: -1px; top: -1px; width: 13px; height: 13px; border: 3px solid #fff; border-radius: 50%; background: #4379f7; }

  .toolbar { position: absolute; left: 462px; top: 1603px; width: 1492px; height: 102px; box-sizing: border-box; padding: 4px 18px 0 16px; border: 2px solid #e8ecf2; border-radius: 28px; background: #fff; box-shadow: 0 6px 20px rgba(15,23,42,.12); display: flex; align-items: center; justify-content: space-between; }
  .tool { height: 74px; box-sizing: border-box; display: flex; flex-direction: column; align-items: center; justify-content: flex-end; padding: 0 16px 4px; border-radius: 12px; color: #64748b; flex: none; }
  .tool :global(.ic) { width: 32px; height: 32px; stroke-width: 1.300; margin-bottom: 2px; }
  .tl { font-size: 18px; line-height: 26px; font-weight: 500; white-space: nowrap; }
  .aa { font-size: 30px; line-height: 34px; font-weight: 300; }
  .tool.act { background: #4379f7; color: #fff; }
  .tool.off { color: #c4cad4; }
</style>
